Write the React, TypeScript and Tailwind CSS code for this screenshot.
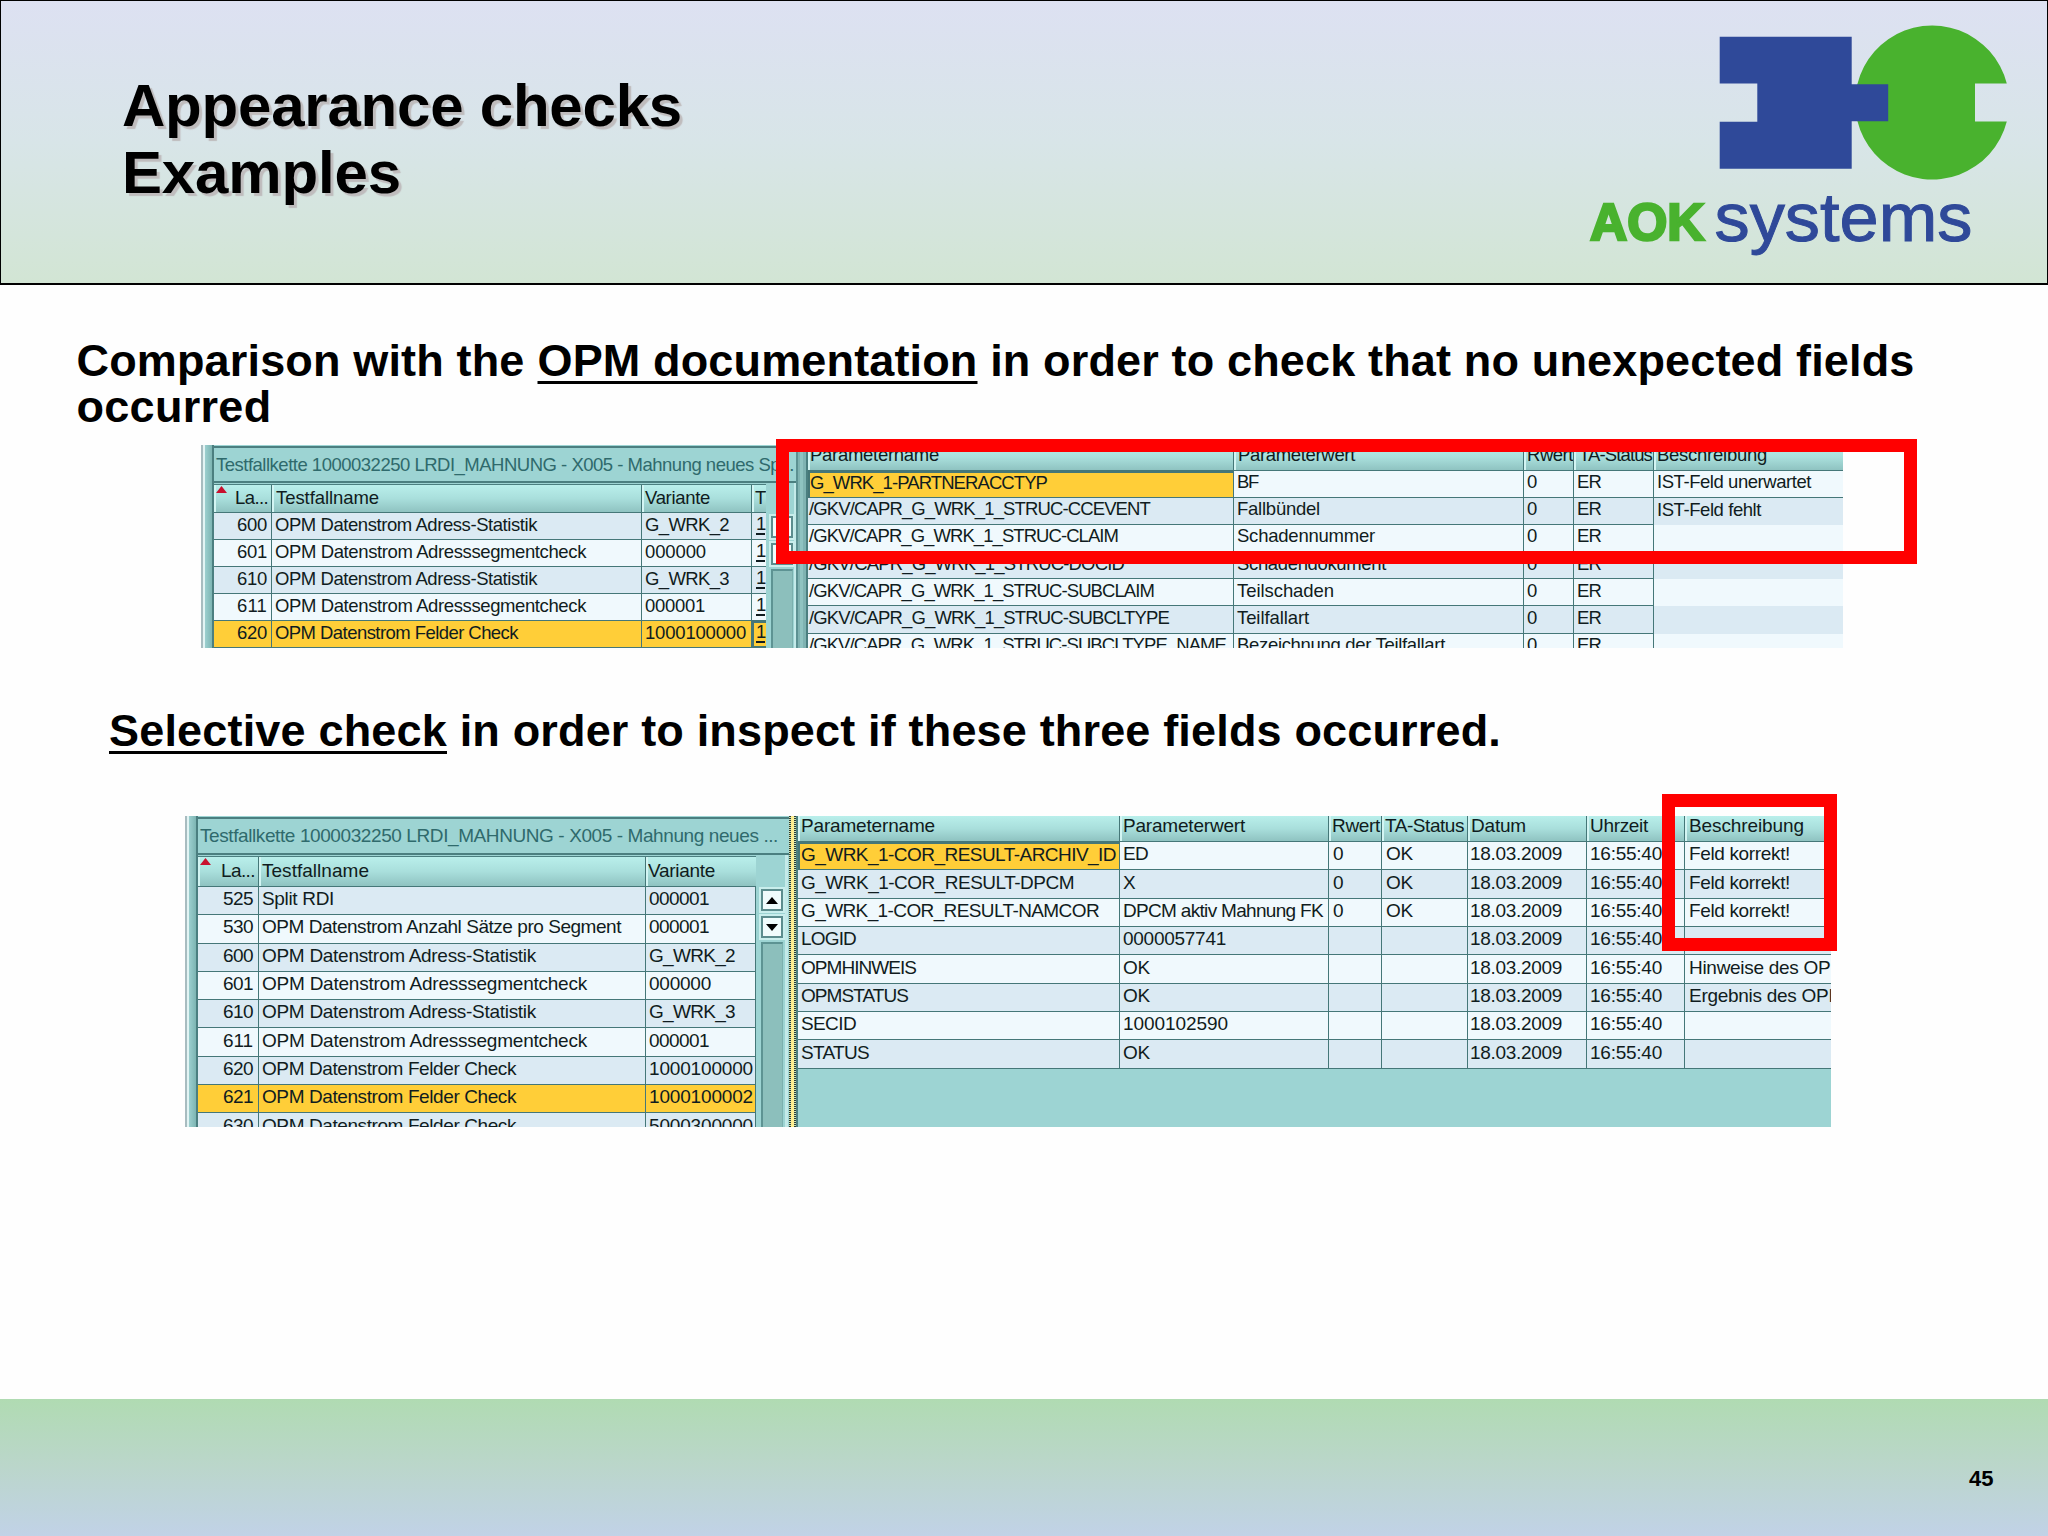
import { useLayoutEffect, useRef } from "react";
import type { ReactNode } from "react";

/** Text set to an exact advance width by spreading its letters. */
function Fit({ w, children, className = "" }: { w?: number; children: ReactNode; className?: string }) {
  const ref = useRef<HTMLSpanElement>(null);
  useLayoutEffect(() => {
    const el = ref.current;
    if (!el || !w) return;
    el.style.letterSpacing = "0px";
    const n = (el.textContent ?? "").length;
    const natural = el.getBoundingClientRect().width;
    if (n > 0) el.style.letterSpacing = `${(w - natural) / n}px`;
  }, [w, children]);
  return (
    <span ref={ref} className={`inline-block whitespace-pre ${className}`}>
      {children}
    </span>
  );
}

type Txt = [string, number] | null;

const HEAD = "bg-linear-to-b from-[#b9efeb] via-[#a9dfdc] to-[#8fc3c1]";
const LINE = "border-[#457778]";

function HeaderCell({ t, className = "", sort = false }: { t: Txt; className?: string; sort?: boolean }) {
  return (
    <div className={`relative flex h-full items-center overflow-hidden border-r border-b ${LINE} ${HEAD} ${className}`}>
      <span className="absolute inset-y-0 left-0 w-[2px] bg-[#d3f5f3]" />
      {sort && (
        <svg className="absolute top-[1px] left-[2px] h-[7px] w-[11px]" viewBox="0 0 11 7">
          <path d="M0 7 L5.5 0 L11 7 Z" fill="#c8102e" />
        </svg>
      )}
      {t && <Fit w={t[1]}>{t[0]}</Fit>}
    </div>
  );
}

function Cell({ t, className = "" }: { t: Txt; className?: string }) {
  return (
    <div className={`flex h-full items-center overflow-hidden border-r border-b ${LINE} ${className}`}>
      {t && <Fit w={t[1]}>{t[0]}</Fit>}
    </div>
  );
}

const DARK = "bg-[#dbeaf3]";
const LIGHT = "bg-[#f0f9fd]";
const GOLD = "bg-[#ffce38]";

function Scroll({ className, arrows }: { className: string; arrows: boolean }) {
  const box = "flex h-[22px] w-[22px] shrink-0 items-center justify-center border-2 border-[#5c8d8e] bg-[#f0fcfc] outline-2 outline-[#c9eeec]";
  return (
    <div className={`flex flex-col items-center ${className}`}>
      <div className={box}>
        {arrows && (
          <svg className="h-[7px] w-[12px]" viewBox="0 0 12 7">
            <path d="M0 7 L6 0 L12 7 Z" fill="#000" />
          </svg>
        )}
      </div>
      <div className={`mt-[5px] ${box}`}>
        {arrows && (
          <svg className="h-[7px] w-[12px]" viewBox="0 0 12 7">
            <path d="M0 0 L6 7 L12 0 Z" fill="#000" />
          </svg>
        )}
      </div>
      <div className="mt-[4px] w-[22px] grow border-t-2 border-r border-l-2 border-[#5d9393] border-r-[#7bb0ae] bg-[#8cbfbc]" />
    </div>
  );
}

function LeftStrip() {
  return (
    <div className="flex h-full w-[13px] shrink-0 border-r-2 border-[#4b7f80]">
      <div className="w-[2px] bg-[#a8bcc0]" />
      <div className="w-[2px] bg-[#e2f4f4]" />
      <div className="grow bg-linear-to-r from-[#9ccfcf] to-[#7db5b3]" />
    </div>
  );
}

/* ---------- first table ---------- */

const left1: { no: string; name: Txt; v: Txt; bg: string }[] = [
  { no: "600", name: ["OPM Datenstrom Adress-Statistik", 262], v: ["G_WRK_2", 84], bg: DARK },
  { no: "601", name: ["OPM Datenstrom Adresssegmentcheck", 311], v: ["000000", 61], bg: LIGHT },
  { no: "610", name: ["OPM Datenstrom Adress-Statistik", 262], v: ["G_WRK_3", 84], bg: DARK },
  { no: "611", name: ["OPM Datenstrom Adresssegmentcheck", 311], v: ["000001", 60], bg: LIGHT },
  { no: "620", name: ["OPM Datenstrom Felder Check", 243], v: ["1000100000", 101], bg: GOLD },
];

const right1: { name: Txt; v: Txt; d: Txt; bg: string }[] = [
  { name: ["G_WRK_1-PARTNERACCTYP", 237], v: ["BF", 21], d: ["IST-Feld unerwartet", 154], bg: LIGHT },
  { name: ["/GKV/CAPR_G_WRK_1_STRUC-CCEVENT", 341], v: ["Fallbündel", 83], d: ["IST-Feld fehlt", 104], bg: DARK },
  { name: ["/GKV/CAPR_G_WRK_1_STRUC-CLAIM", 309], v: ["Schadennummer", 138], d: null, bg: LIGHT },
  { name: ["/GKV/CAPR_G_WRK_1_STRUC-DOCID", 315], v: ["Schadendokument", 149], d: null, bg: DARK },
  { name: ["/GKV/CAPR_G_WRK_1_STRUC-SUBCLAIM", 345], v: ["Teilschaden", 97], d: null, bg: LIGHT },
  { name: ["/GKV/CAPR_G_WRK_1_STRUC-SUBCLTYPE", 360], v: ["Teilfallart", 72], d: null, bg: DARK },
  { name: ["/GKV/CAPR_G_WRK_1_STRUC-SUBCLTYPE_NAME", 417], v: ["Bezeichnung der Teilfallart", 208], d: null, bg: LIGHT },
];

function TableOne() {
  return (
    <div className="relative ml-[201px] h-[203px] w-[1642px]">
      <div className="flex h-full w-full overflow-hidden bg-[#9dd4d3] text-[18.5px] leading-none text-[#101c20]">
        <LeftStrip />
        <div className="w-[582px] shrink-0 pt-px">
          <div className="flex h-[37px] items-center border-t-2 border-b-2 border-[#4b7f80] pt-px pl-[2px] text-[#2f6a6c]">
            <Fit w={578}>Testfallkette 1000032250 LRDI_MAHNUNG - X005 - Mahnung neues Sp...</Fit>
          </div>
          <div className="flex">
            <div className="w-[552px] shrink-0 overflow-hidden">
              <div className="mt-px grid h-[29px] grid-cols-[58px_370px_110px_14px] border-t border-[#4b7f80]">
                <HeaderCell t={["La...", 33]} sort className="justify-end pr-[3px] pb-px" />
                <HeaderCell t={["Testfallname", 103]} className="pb-px pl-[4px]" />
                <HeaderCell t={["Variante", 65]} className="pb-px pl-[3px]" />
                <HeaderCell t={["T", 11]} className="border-r-0 pb-px pl-[3px]" />
              </div>
              {left1.map((r) => (
                <div key={r.no} className={`grid h-[27.1px] grid-cols-[58px_370px_110px_14px] ${r.bg}`}>
                  <Cell t={[r.no, 30]} className="justify-end pr-[4px] pb-[2px]" />
                  <Cell t={r.name} className="pb-[2px] pl-[3px]" />
                  <Cell t={r.v} className="pb-[2px] pl-[3px]" />
                  <div
                    className={`overflow-hidden ${LINE} ${r.bg === GOLD ? "border-2 border-r-0 pl-[2px]" : "border-b pt-[2px] pl-[4px]"}`}
                  >
                    <span className="block w-[9px] border-b-2 border-[#101c20] leading-[18px]">1</span>
                  </div>
                </div>
              ))}
            </div>
            <Scroll className="mt-[33px] ml-[4px] h-[132px] w-[24px]" arrows={false} />
            <div className="h-[166px] w-[2px] bg-[#c4eae9]" />
          </div>
        </div>
        <div className="flex h-full w-[10px] shrink-0 border-l-2 border-[#5c9192] bg-[#7fb3b2]">
          <div className="mx-[2px] w-[3px] bg-[#8fc3c1]" />
        </div>
        <div className="h-full w-[1037px] shrink-0 border-l-2 border-[#4b7f80]">
          <div className="grid h-[26px] grid-cols-[426px_290px_50px_80px_189px]">
            <HeaderCell t={["Parametername", 129]} className="pb-[5px] pl-[2px]" />
            <HeaderCell t={["Parameterwert", 117]} className="pb-[5px] pl-[4px]" />
            <HeaderCell t={["Rwert", 46]} className="pb-[5px] pl-[3px]" />
            <HeaderCell t={["TA-Status", 73]} className="pb-[5px] pl-[5px]" />
            <HeaderCell t={["Beschreibung", 110]} className="border-r-0 pb-[5px] pl-[3px]" />
          </div>
          {right1.map((r, i) => (
            <div key={i} className={`grid h-[27.1px] grid-cols-[426px_290px_50px_80px_189px] ${r.bg}`}>
              <Cell t={r.name} className={i === 0 ? "border-2 bg-[#ffce38] pb-[3px]" : "pb-[3px] pl-px"} />
              <Cell t={r.v} className="pb-[3px] pl-[3px]" />
              <Cell t={["0", 10]} className="pb-[3px] pl-[3px]" />
              <Cell t={["ER", 24]} className="pb-[3px] pl-[3px]" />
              <Cell t={r.d} className={`border-r-0 pb-[3px] pl-[3px] ${i > 0 ? "border-b-0" : ""}`} />
            </div>
          ))}
        </div>
      </div>
      <div className="absolute top-[-6px] left-[575px] h-[125px] w-[1141px] border-[13px] border-[#ff0000]" />
    </div>
  );
}

/* ---------- second table ---------- */

const left2: { no: string; name: Txt; v: Txt; bg: string }[] = [
  { no: "525", name: ["Split RDI", 72], v: ["000001", 60], bg: DARK },
  { no: "530", name: ["OPM Datenstrom Anzahl Sätze pro Segment", 359], v: ["000001", 60], bg: LIGHT },
  { no: "600", name: ["OPM Datenstrom Adress-Statistik", 274], v: ["G_WRK_2", 86], bg: DARK },
  { no: "601", name: ["OPM Datenstrom Adresssegmentcheck", 325], v: ["000000", 62], bg: LIGHT },
  { no: "610", name: ["OPM Datenstrom Adress-Statistik", 274], v: ["G_WRK_3", 86], bg: DARK },
  { no: "611", name: ["OPM Datenstrom Adresssegmentcheck", 325], v: ["000001", 60], bg: LIGHT },
  { no: "620", name: ["OPM Datenstrom Felder Check", 254], v: ["1000100000", 104], bg: DARK },
  { no: "621", name: ["OPM Datenstrom Felder Check", 254], v: ["1000100002", 104], bg: GOLD },
  { no: "630", name: ["OPM Datenstrom Felder Check", 254], v: ["5000300000", 104], bg: DARK },
];

const right2: { name: Txt; v: Txt; ok: boolean; d: Txt; bg: string }[] = [
  { name: ["G_WRK_1-COR_RESULT-ARCHIV_ID", 315], v: ["ED", 25], ok: true, d: ["Feld korrekt!", 101], bg: LIGHT },
  { name: ["G_WRK_1-COR_RESULT-DPCM", 273], v: ["X", 13], ok: true, d: ["Feld korrekt!", 101], bg: DARK },
  { name: ["G_WRK_1-COR_RESULT-NAMCOR", 298], v: ["DPCM aktiv Mahnung FK", 200], ok: true, d: ["Feld korrekt!", 101], bg: LIGHT },
  { name: ["LOGID", 55], v: ["0000057741", 103], ok: false, d: null, bg: DARK },
  { name: ["OPMHINWEIS", 115], v: ["OK", 27], ok: false, d: ["Hinweise des OPM", 157], bg: LIGHT },
  { name: ["OPMSTATUS", 107], v: ["OK", 27], ok: false, d: ["Ergebnis des OPM", 155], bg: DARK },
  { name: ["SECID", 55], v: ["1000102590", 105], ok: false, d: null, bg: LIGHT },
  { name: ["STATUS", 68], v: ["OK", 27], ok: false, d: null, bg: DARK },
];

const DOTS = "w-[2px] bg-[repeating-linear-gradient(to_bottom,#2a3a34_0px,#2a3a34_1px,#cfe3b4_1px,#cfe3b4_2px)]";

function TableTwo() {
  return (
    <div className="relative ml-[185px] h-[311px] w-[1646px]">
      <div className="flex h-full w-full overflow-hidden bg-[#9dd4d3] text-[19px] leading-none text-[#101c20]">
        <LeftStrip />
        <div className="w-[592px] shrink-0 pt-px">
          <div className="flex h-[38px] items-center border-t-2 border-b-2 border-[#4b7f80] pb-[2px] pl-[2px] text-[#2f6a6c]">
            <Fit w={578}>Testfallkette 1000032250 LRDI_MAHNUNG - X005 - Mahnung neues ...</Fit>
          </div>
          <div className="flex">
            <div className="w-[558px] shrink-0 overflow-hidden">
              <div className="mt-px grid h-[31px] grid-cols-[61px_387px_110px] border-t border-[#4b7f80]">
                <HeaderCell t={["La...", 34]} sort className="justify-end pr-[3px] pb-[3px]" />
                <HeaderCell t={["Testfallname", 107]} className="pb-[3px] pl-[3px]" />
                <HeaderCell t={["Variante", 67]} className="border-r-0 pb-[3px] pl-[2px]" />
              </div>
              {left2.map((r) => (
                <div key={r.no} className={`grid h-[28.3px] grid-cols-[61px_387px_110px] ${r.bg}`}>
                  <Cell t={[r.no, 30]} className="justify-end pr-[5px] pb-[4px]" />
                  <Cell t={r.name} className="pb-[4px] pl-[3px]" />
                  <Cell t={r.v} className="pb-[4px] pl-[3px]" />
                </div>
              ))}
            </div>
            <Scroll className="mt-[34px] ml-[4px] h-[241px] w-[24px]" arrows />
            <div className="ml-px h-[275px] w-[3px] bg-[#c4eae9]" />
          </div>
        </div>
        <div className="-ml-px flex h-full w-[9px] shrink-0">
          <div className={DOTS} />
          <div className="w-[3px] bg-[#ffee90]" />
          <div className={DOTS} />
          <div className="w-[2px] bg-[#4b7f80]" />
        </div>
        <div className="h-full w-[1033px] shrink-0">
          <div className="grid h-[26px] grid-cols-[322px_209px_53px_86px_119px_98px_146px]">
            <HeaderCell t={["Parametername", 134]} className="pb-[6px] pl-[3px]" />
            <HeaderCell t={["Parameterwert", 122]} className="pb-[6px] pl-[3px]" />
            <HeaderCell t={["Rwert", 48]} className="pb-[6px] pl-[3px]" />
            <HeaderCell t={["TA-Status", 79]} className="pb-[6px] pl-[3px]" />
            <HeaderCell t={["Datum", 55]} className="pb-[6px] pl-[3px]" />
            <HeaderCell t={["Uhrzeit", 58]} className="pb-[6px] pl-[3px]" />
            <HeaderCell t={["Beschreibung", 115]} className="border-r-0 pb-[6px] pl-[4px]" />
          </div>
          {right2.map((r, i) => (
            <div key={i} className={`grid h-[28.35px] grid-cols-[322px_209px_53px_86px_119px_98px_146px] ${r.bg}`}>
              <Cell t={r.name} className={i === 0 ? "border-2 bg-[#ffce38] pb-[4px] pl-px" : "pb-[4px] pl-[3px]"} />
              <Cell t={r.v} className="pb-[4px] pl-[3px]" />
              <Cell t={r.ok ? ["0", 10] : null} className="pb-[4px] pl-[4px]" />
              <Cell t={r.ok ? ["OK", 27] : null} className="pb-[4px] pl-[4px]" />
              <Cell t={["18.03.2009", 92]} className="pb-[4px] pl-[2px]" />
              <Cell t={["16:55:40", 72]} className="pb-[4px] pl-[3px]" />
              <Cell t={r.d} className="border-r-0 pb-[4px] pl-[4px]" />
            </div>
          ))}
        </div>
      </div>
      <div className="absolute top-[-22px] left-[1477px] h-[157px] w-[175px] border-[13px] border-[#ff0000]" />
    </div>
  );
}

function Logo() {
  return (
    <svg className="h-[240px] w-[448px]" viewBox="1580 20 448 240">
      <path
        fill="#49b22e"
        d="M2006.8 83.5 A77 77 0 1 0 2006.8 121.5 L1975 121.5 L1975 83.5 Z"
      />
      <path
        fill="#2f4999"
        d="M1719.7 36.7 H1851.7 V84.3 H1888.2 V121.2 H1851.7 V168.7 H1719.7 V121.7 H1757.3 V83.5 H1719.7 Z"
      />
      <text
        x="1590"
        y="239.5"
        textLength="114.5"
        lengthAdjust="spacingAndGlyphs"
        fill="#49b22e"
        stroke="#49b22e"
        strokeWidth="2.6"
        className="font-['Liberation_Sans'] text-[51px] font-bold"
      >
        AOK
      </text>
      <text
        x="1714.5"
        y="240.5"
        textLength="258"
        lengthAdjust="spacingAndGlyphs"
        fill="#2f4999"
        stroke="#2f4999"
        strokeWidth="1"
        className="font-['Liberation_Sans'] text-[68px]"
      >
        systems
      </text>
    </svg>
  );
}

export default function App() {
  return (
    <div className="flex h-[1536px] w-[2048px] flex-col overflow-hidden bg-[#fefefe] font-['Liberation_Sans',Arial,sans-serif] text-black">
      <header className="flex h-[285px] shrink-0 justify-between border border-b-2 border-black bg-linear-to-b from-[#dde1f2] via-[#d8e5e8] to-[#d2e5d4]">
        <h1 className="pt-[72px] pl-[121px] text-[60px] leading-[66.5px] font-bold [text-shadow:3px_3px_1px_#bfbcbd]">
          <Fit w={560}>Appearance checks</Fit>
          <br />
          <Fit w={279}>Examples</Fit>
        </h1>
        <div className="pt-[19px] pr-[19px]">
          <Logo />
        </div>
      </header>

      <main className="flex grow flex-col">
        <p className="h-[160px] pt-[53px] pl-[76.5px] text-[45px] leading-[46px] font-bold">
          <Fit w={448}>Comparison with the</Fit>
          <Fit w={13}> </Fit>
          <Fit w={440} className="underline decoration-[3px] underline-offset-[5px]">OPM documentation</Fit>
          <Fit w={937}> in order to check that no unexpected fields</Fit>
          <br />
          <Fit w={195}>occurred</Fit>
        </p>
        <TableOne />
        <p className="h-[168px] pt-[60px] pl-[109px] text-[45px] leading-[46px] font-bold">
          <Fit w={338} className="underline decoration-[3px] underline-offset-[5px]">Selective check</Fit>
          <Fit w={1054}> in order to inspect if these three fields occurred.</Fit>
        </p>
        <TableTwo />
      </main>

      <footer className="flex h-[137px] shrink-0 justify-end bg-linear-to-b from-[#b0dbb2] via-[#bbd6cb] to-[#c1d2e7] pt-[68px] pr-[54.5px] text-[22px] leading-6 font-bold">
        45
      </footer>
    </div>
  );
}
